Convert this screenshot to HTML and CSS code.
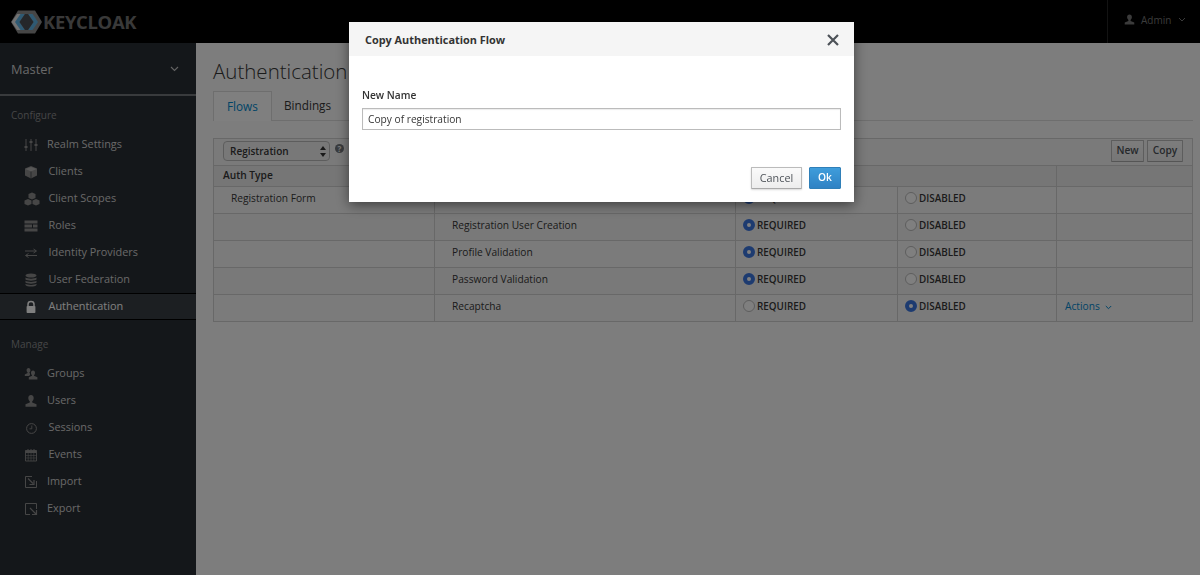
FILE: index.html

```html
<!DOCTYPE html>
<html>
<head>
    <meta charset="utf-8">
    <title>Keycloak - Authentication</title>
    <link rel="stylesheet" href="styles.css">
</head>
<body>
    <header class="topbar">
        <div class="brand">
            <svg class="brand-mark" width="31" height="24" viewBox="0 0 31 24">
                <path d="M7 0.5H24L31 12L24 23.5H7L0 12Z" fill="#8d8d8d"/>
                <path d="M0.5 12L6 4H11L5.5 12L11 20H6Z" fill="#e4e4e4"/>
                <path d="M4 12L9.5 4H14L8.5 12L14 20H9.5Z" fill="#5fb4e6"/>
                <path d="M27 12L21.5 4H17L22.5 12L17 20H21.5Z" fill="#5fb4e6"/>
                <path d="M8.5 12L14 4H17L22.5 12L17 20H14Z" fill="#4a4f55"/>
            </svg>
            <span class="brand-name">KEYCLOAK</span>
        </div>
        <div class="user-menu">
            <svg width="11" height="11" viewBox="0 0 12 12"><path d="M6 0.5C4.3 0.5 3.4 1.8 3.4 3.4C3.4 4.8 4 5.9 4.8 6.5V7.6L0.8 9.3V11.5H11.2V9.3L7.2 7.6V6.5C8 5.9 8.6 4.8 8.6 3.4C8.6 1.8 7.7 0.5 6 0.5Z" fill="#777"/></svg>
            <span class="user-name">Admin</span>
            <svg width="8" height="5" viewBox="0 0 8 5"><path d="M1 1L4 4L7 1" fill="none" stroke="#777" stroke-width="1"/></svg>
        </div>
    </header>

    <div class="layout">
        <nav class="sidebar">
            <div class="realm">
                <span>Master</span>
                <svg width="9" height="6" viewBox="0 0 9 6"><path d="M1 1L4.5 4.5L8 1" fill="none" stroke="#c8c8c8" stroke-width="1.1"/></svg>
            </div>
            <h4 class="nav-title">Configure</h4>
            <ul class="nav-list">
                <li class="nav-item">
                    <svg class="nav-icon" viewBox="0 0 14 14"><path d="M2 1V13M7 1V13M12 1V13" stroke="#8c8c8c" stroke-width="1"/><path d="M.5 8H3.5V10H.5ZM5.5 3H8.5V5H5.5ZM10.5 6H13.5V8H10.5Z" fill="#8c8c8c"/></svg>
                    <span class="nav-text tight">Realm Settings</span>
                </li>
                <li class="nav-item">
                    <svg class="nav-icon" viewBox="0 0 14 14"><path d="M7 1L13 3.5V10.5L7 13.5L1 10.5V3.5Z" fill="#8c8c8c"/><path d="M1.5 4L7 6.5L12.5 4L7 2Z" fill="#b0b0b0"/><path d="M7 6.5V13.5" stroke="#33373c" stroke-width=".7"/></svg>
                    <span class="nav-text">Clients</span>
                </li>
                <li class="nav-item">
                    <svg class="nav-icon wide" viewBox="0 0 16 14"><path d="M8 0.5L11.5 2V6L8 7.5L4.5 6V2ZM4 7L7.5 8.5V12L4 13.5L0.5 12V8.5ZM12 7L15.5 8.5V12L12 13.5L8.5 12V8.5Z" fill="#8c8c8c"/></svg>
                    <span class="nav-text">Client Scopes</span>
                </li>
                <li class="nav-item">
                    <svg class="nav-icon" viewBox="0 0 14 14"><path d="M0.5 1.5H13.5V4.5H0.5ZM0.5 5.5H8V8.5H0.5ZM9 5.5H13.5V8.5H9ZM0.5 9.5H13.5V12.5H0.5Z" fill="#8c8c8c"/></svg>
                    <span class="nav-text">Roles</span>
                </li>
                <li class="nav-item">
                    <svg class="nav-icon" viewBox="0 0 14 14"><path d="M1 5H12M9.5 3L12.5 5L9.5 7M13 9.5H2M4.5 7.5L1.5 9.5L4.5 11.5" fill="none" stroke="#8c8c8c" stroke-width="1"/></svg>
                    <span class="nav-text">Identity Providers</span>
                </li>
                <li class="nav-item">
                    <svg class="nav-icon" viewBox="0 0 14 14"><ellipse cx="7" cy="2.5" rx="5.5" ry="2" fill="#8c8c8c"/><path d="M1.5 4.5C3 6 11 6 12.5 4.5V6.5C11 8 3 8 1.5 6.5ZM1.5 7.8C3 9.3 11 9.3 12.5 7.8V9.6C11 11 3 11 1.5 9.6ZM1.5 10.8C3 12.3 11 12.3 12.5 10.8V12C11 14 3 14 1.5 12Z" fill="#8c8c8c"/></svg>
                    <span class="nav-text">User Federation</span>
                </li>
                <li class="nav-item active">
                    <svg class="nav-icon" viewBox="0 0 14 14"><path d="M4 6V4.2C4 2.5 5.3 1.5 7 1.5S10 2.5 10 4.2V6" fill="none" stroke="#fff" stroke-width="1.5"/><rect x="2.6" y="6" width="8.8" height="7" rx=".8" fill="#fff"/></svg>
                    <span class="nav-text">Authentication</span>
                </li>
            </ul>
            <h4 class="nav-title manage">Manage</h4>
            <ul class="nav-list">
                <li class="nav-item">
                    <svg class="nav-icon" viewBox="0 0 14 14"><path d="M4.5 1C3.3 1 2.6 2 2.6 3.2C2.6 4.2 3 5 3.6 5.4V6L0.8 7.4V9H5L6 8V6.5L5.4 6V5.4C6 5 6.4 4.2 6.4 3.2C6.4 2 5.7 1 4.5 1Z" fill="#8c8c8c"/><path d="M9 3.5C7.7 3.5 7 4.5 7 5.7C7 6.8 7.4 7.6 8 8V8.8L4.8 10.3V12.5H13.4V10.3L10 8.8V8C10.6 7.6 11 6.8 11 5.7C11 4.5 10.3 3.5 9 3.5Z" fill="#8c8c8c"/></svg>
                    <span class="nav-text tight">Groups</span>
                </li>
                <li class="nav-item">
                    <svg class="nav-icon" viewBox="0 0 14 14"><path d="M7 1C5.2 1 4.3 2.4 4.3 4C4.3 5.5 5 6.7 5.8 7.2V8.4L1.5 10.2V12.8H12.5V10.2L8.2 8.4V7.2C9 6.7 9.7 5.5 9.7 4C9.7 2.4 8.8 1 7 1Z" fill="#8c8c8c"/></svg>
                    <span class="nav-text tight">Users</span>
                </li>
                <li class="nav-item">
                    <svg class="nav-icon" viewBox="0 0 14 14"><circle cx="7.5" cy="7.5" r="4.9" fill="none" stroke="#8c8c8c" stroke-width="1"/><path d="M7.8 4.5V7.8H5.5" fill="none" stroke="#8c8c8c" stroke-width=".9"/></svg>
                    <span class="nav-text">Sessions</span>
                </li>
                <li class="nav-item">
                    <svg class="nav-icon" viewBox="0 0 14 14"><path d="M1.5 2.5H12.5V13H1.5Z" fill="none" stroke="#8c8c8c" stroke-width=".9"/><path d="M1.5 2.5H12.5V5H1.5ZM3.5 1H4.5V3H3.5ZM9.5 1H10.5V3H9.5ZM6.5 1H7.5V3H6.5Z" fill="#8c8c8c"/><path d="M1.5 7.5H12.5M1.5 10H12.5M4.2 5V13M7 5V13M9.8 5V13" stroke="#8c8c8c" stroke-width=".6"/></svg>
                    <span class="nav-text">Events</span>
                </li>
                <li class="nav-item">
                    <svg class="nav-icon" viewBox="0 0 14 14"><path d="M8 1.5H1.5V12.5H12.5V6" fill="none" stroke="#8c8c8c" stroke-width="1"/><path d="M4 3.5L9 8.5M10 5V9.5H5.5" fill="none" stroke="#8c8c8c" stroke-width="1.2"/></svg>
                    <span class="nav-text tight">Import</span>
                </li>
                <li class="nav-item">
                    <svg class="nav-icon" viewBox="0 0 14 14"><path d="M6 12.5H1.5V1.5H12.5V7" fill="none" stroke="#8c8c8c" stroke-width="1"/><path d="M6 6L12 12M12.5 8V12.5H8" fill="none" stroke="#8c8c8c" stroke-width="1.2"/></svg>
                    <span class="nav-text tight">Export</span>
                </li>
            </ul>
        </nav>

        <main class="content">
            <h1 class="page-title">Authentication</h1>
            <div class="tabs">
                <a class="tab active">Flows</a>
                <a class="tab">Bindings</a>
            </div>

            <table class="flows">
                <colgroup>
                    <col class="col-type"><col class="col-name"><col class="col-req"><col class="col-dis"><col>
                </colgroup>
                <thead>
                    <tr class="toolbar">
                        <th colspan="5">
                            <div class="toolbar-row">
                                <div class="select">
                                    <span>Registration</span>
                                    <svg width="6" height="11" viewBox="0 0 6 11"><path d="M3 0L6 4H0ZM3 11L0 7H6Z" fill="#333"/></svg>
                                </div>
                                <span class="help">?</span>
                                <div class="toolbar-actions">
                                    <button class="btn new">New</button>
                                    <button class="btn copy">Copy</button>
                                </div>
                            </div>
                        </th>
                    </tr>
                    <tr class="heads">
                        <th>Auth Type</th>
                        <th colspan="3"></th>
                        <th></th>
                    </tr>
                </thead>
                <tbody>
                    <tr>
                        <td class="type">Registration Form</td>
                        <td class="name"></td>
                        <td><label class="radio"><i class="dot on"></i>REQUIRED</label></td>
                        <td><label class="radio"><i class="dot"></i>DISABLED</label></td>
                        <td></td>
                    </tr>
                    <tr>
                        <td></td>
                        <td class="name">Registration User Creation</td>
                        <td><label class="radio"><i class="dot on"></i>REQUIRED</label></td>
                        <td><label class="radio"><i class="dot"></i>DISABLED</label></td>
                        <td></td>
                    </tr>
                    <tr>
                        <td></td>
                        <td class="name">Profile Validation</td>
                        <td><label class="radio"><i class="dot on"></i>REQUIRED</label></td>
                        <td><label class="radio"><i class="dot"></i>DISABLED</label></td>
                        <td></td>
                    </tr>
                    <tr>
                        <td></td>
                        <td class="name">Password Validation</td>
                        <td><label class="radio"><i class="dot on"></i>REQUIRED</label></td>
                        <td><label class="radio"><i class="dot"></i>DISABLED</label></td>
                        <td></td>
                    </tr>
                    <tr>
                        <td></td>
                        <td class="name">Recaptcha</td>
                        <td><label class="radio"><i class="dot"></i>REQUIRED</label></td>
                        <td><label class="radio"><i class="dot on"></i>DISABLED</label></td>
                        <td class="actions">Actions
                            <svg width="7" height="5" viewBox="0 0 7 5"><path d="M.8 1L3.5 3.7L6.2 1" fill="none" stroke="#0088ce" stroke-width="1"/></svg>
                        </td>
                    </tr>
                </tbody>
            </table>
        </main>
    </div>

    <div class="backdrop"></div>
    <div class="modal-wrap">
        <div class="modal">
            <div class="modal-head">
                <h2>Copy Authentication Flow</h2>
                <svg class="close" width="12" height="12" viewBox="0 0 12 12"><path d="M1 1L11 11M11 1L1 11" stroke="#4d5258" stroke-width="2.2"/></svg>
            </div>
            <div class="modal-body">
                <div class="field-label">New Name</div>
                <div class="field-input">Copy of registration</div>
            </div>
            <div class="modal-foot">
                <button class="btn cancel">Cancel</button>
                <button class="btn primary">Ok</button>
            </div>
        </div>
    </div>
</body>
</html>
```

FILE: styles.css

```css
* { box-sizing: border-box; }
html, body { margin: 0; height: 575px; overflow: hidden; }
body { font-family: "Open Sans", sans-serif; font-size: 10.2px; color: #363636; background: #fafafa; }
ul { list-style: none; margin: 0; padding: 0; }
h1, h2, h4 { margin: 0; }

/* Top bar */
.topbar { height: 43px; background: #000; display: flex; justify-content: space-between; }
.brand { display: flex; align-items: center; padding-left: 11px; }
.brand-name { font-size: 18.4px; font-weight: 700; color: #d0d0d0; opacity: .55; letter-spacing: -0.3px; margin-left: 1px; }
.user-menu { width: 93px; border-left: 1px solid #262626; display: flex; align-items: center; padding: 0 0 4px 16px; color: #777; font-size: 10px; }
.user-name { margin: 0 7px 0 6px; }

.layout { display: flex; height: 532px; }

/* Sidebar */
.sidebar { width: 196px; background: #292e34; color: #d1d1d1; flex: none; }
.realm { height: 53px; border-bottom: 2px solid #72767b; padding: 1px 17px 0 11px; display: flex; justify-content: space-between; align-items: center; font-size: 12.8px; }
.nav-title { font-size: 10px; font-weight: 400; color: #8b8d8f; padding: 12px 0 0 11px; height: 35px; }
.nav-title.manage { height: 40px; padding-top: 17px; }
.nav-item { height: 27px; display: flex; align-items: center; padding: 0 0 2px 24px; font-size: 10.9px; }
.nav-item.active { background: #393f44; color: #fff; border-top: 1px solid #000; border-bottom: 1px solid #000; }
.nav-icon { width: 14px; height: 14px; flex: none; margin-top: 2px; }
.nav-icon.wide { width: 16px; margin-right: -2px; }
.nav-text { margin-left: 10.5px; }
.nav-text.tight { margin-left: 9px; }

/* Main content */
.content { flex: 1; padding: 0 7px 0 17px; }
.page-title { font-size: 20.5px; font-weight: 300; color: #363636; line-height: 27px; margin-top: 15px; }
.tabs { display: flex; height: 30px; margin-top: 6px; border-bottom: 1px solid #ddd; font-size: 11.75px; }
.tab { padding: 6px 12px 0; height: 30px; color: #363636; }
.tab.active { color: #0088ce; background: #fff; border: 1px solid #ddd; border-bottom: 0; width: 59px; padding-left: 13px; }

/* Flows table */
.flows { width: 980px; margin-top: 17px; border-collapse: collapse; table-layout: fixed; border: 1px solid #d1d1d1; }
.col-type { width: 221px; }
.col-name { width: 301px; }
.col-req { width: 162px; }
.col-dis { width: 159px; }
.flows td, .flows th { border: 1px solid #d1d1d1; padding: 0; text-align: left; }
.toolbar th { background: #f5f5f5; height: 27px; font-weight: 400; padding: 0 9px 2px; }
.toolbar-row { display: flex; align-items: center; }
.select { width: 107px; height: 20px; border: 1px solid #bbb; border-radius: 4px; background: #f1f1f1; display: flex; justify-content: space-between; align-items: center; padding: 0 3px 0 6px; font-weight: 600; font-size: 10px; }
.help { width: 9px; height: 9px; border-radius: 50%; background: #72767b; color: #f5f5f5; font-size: 8px; font-weight: 700; line-height: 9px; text-align: center; margin: 0 0 5px 5px; }
.toolbar-actions { margin-left: auto; display: flex; gap: 3px; }
.heads th { height: 21px; background: #ececec; font-weight: 600; font-size: 10.2px; padding-left: 9px; padding-bottom: 3px; }
.flows tbody td { height: 27px; background: #f7f7f7; padding-bottom: 5px; }
.flows tbody tr:nth-child(even) td { background: #f3f3f3; }
.flows .type { padding-left: 17px; }
.flows .name { padding-left: 17px; }
.radio { display: flex; align-items: center; gap: 2px; padding-left: 7px; font-size: 9.9px; font-weight: 600; }
.dot { width: 12px; height: 12px; border-radius: 50%; border: 1px solid #bbb; background: #fff; flex: none; }
.dot.on { border: 4px solid #3b76e1; }
.flows .actions { color: #0088ce; padding-left: 8px; }
.actions svg { margin-left: 3px; }

/* Buttons */
.btn { font-family: inherit; font-size: 10.2px; font-weight: 600; color: #4d5258; height: 22px; padding: 0 0 2px; border: 1px solid #bbb; border-bottom-color: #aaa; border-radius: 1px; background: linear-gradient(#fafafa, #ededed); }
.btn.new { width: 33px; }
.btn.copy { width: 36px; }
.btn.primary { width: 32px; color: #fff; border-color: #2f7fb8; background: linear-gradient(#3f9ddb, #2f82c4); }
.btn.cancel { width: 51px; font-weight: 400; font-size: 10.8px; box-shadow: 0 1px 2px rgba(0,0,0,.15); }

/* Modal */
.backdrop { position: fixed; inset: 0; background: rgba(0,0,0,.5); }
.modal-wrap { position: fixed; inset: 0; padding: 22px 0 0 349px; }
.modal { width: 505px; height: 180px; background: #fff; box-shadow: 0 3px 12px rgba(0,0,0,.5); display: flex; flex-direction: column; }
.modal-head { height: 34px; background: #f5f5f5; display: flex; justify-content: space-between; align-items: center; padding: 0 15px 0 16px; }
.modal-head h2 { font-size: 10.9px; font-weight: 700; color: #333; }
.close { margin-top: 2px; }
.modal-body { padding: 32px 13px 0; flex: 1; }
.field-label { font-size: 10.2px; font-weight: 600; color: #333; line-height: 16px; margin-top: -1px; }
.field-input { margin-top: 5px; height: 22px; border: 1px solid #bbb; padding: 0 5px; line-height: 20px; font-size: 10.2px; color: #363636; box-shadow: inset 0 1px 1px rgba(0,0,0,.08); }
.modal-foot { display: flex; justify-content: flex-end; gap: 7px; padding: 0 13px 13px; }
```
